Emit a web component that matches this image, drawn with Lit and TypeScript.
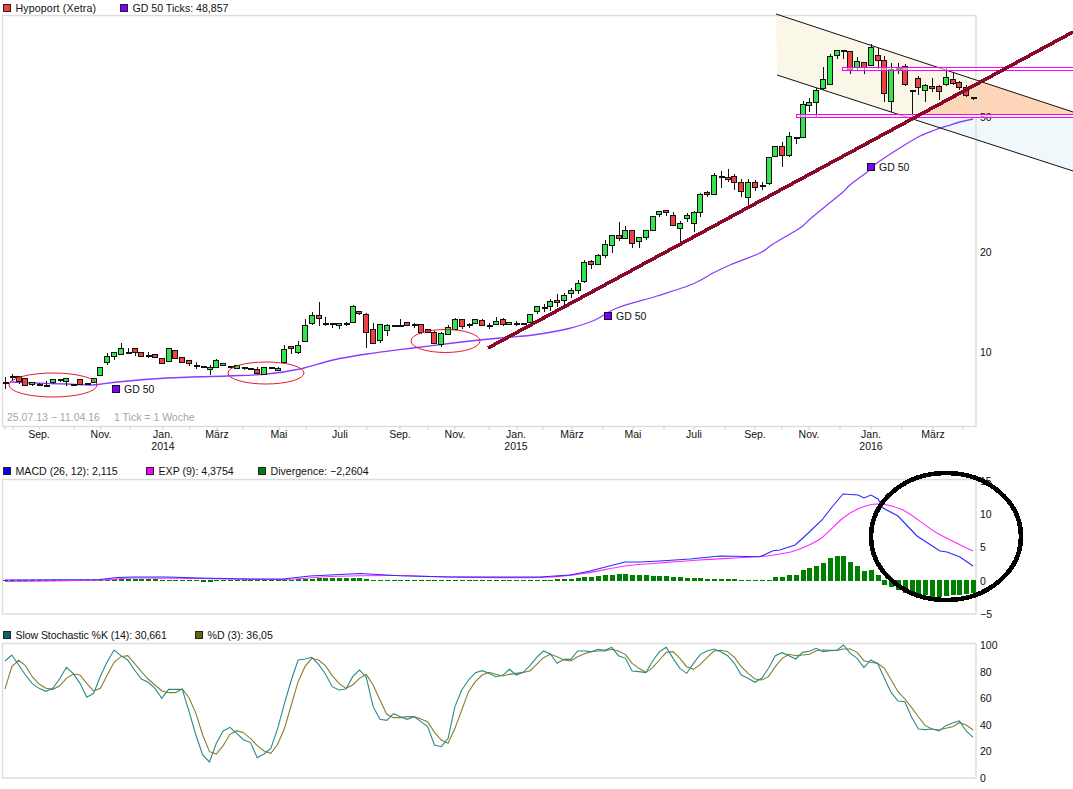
import {LitElement, html, svg, css} from 'lit';
import {customElement} from 'lit/decorators.js';

// weekly x position, 143 weeks across the plot
const wx = (i: number) => Math.round(5 + i * 6.817);
const pts = (p: number[][]) => p.map((q) => q.join(',')).join(' ');

// catmull-rom through the points, for the hand read moving averages
const smooth = (p: number[][]) => {
  let d = `M${p[0][0]} ${p[0][1]}`;
  for (let i = 0; i < p.length - 1; i++) {
    const a = p[Math.max(i - 1, 0)], b = p[i], c = p[i + 1], e = p[Math.min(i + 2, p.length - 1)];
    const c1 = [b[0] + (c[0] - a[0]) / 6, b[1] + (c[1] - a[1]) / 6];
    const c2 = [c[0] - (e[0] - b[0]) / 6, c[1] - (e[1] - b[1]) / 6];
    d += ` C${c1[0].toFixed(1)} ${c1[1].toFixed(1)} ${c2[0].toFixed(1)} ${c2[1].toFixed(1)} ${c[0]} ${c[1]}`;
  }
  return d;
};

// [bodyTop, bodyBottom, high, low, kind] kind: 0 up, 1 down, 2 flat
const CANDLES = [
  [382,382,377,388,2],[376,376,374,380,2],[376,381,376,383,1],[378,385,378,385,1],[382,384,382,385,0],
  [384,384,383,385,2],[385,385,381,385,2],[379,382,379,383,0],[379,379,379,381,2],[378,381,378,385,0],
  [384,384,384,384,2],[379,384,379,384,1],[383,383,383,383,2],[378,382,378,382,0],[367,375,367,375,0],
  [356,362,353,364,0],[352,356,352,359,0],[348,354,343,354,0],[352,352,348,352,2],[348,352,348,355,1],
  [352,356,352,356,1],[355,355,352,357,2],[354,357,354,357,1],[358,363,358,363,1],[348,361,348,361,0],
  [350,358,350,358,1],[357,362,357,362,1],[360,363,360,365,1],[365,365,362,368,2],[366,366,366,366,2],
  [367,369,365,374,0],[360,367,359,367,0],[363,365,363,365,0],[366,366,366,367,2],[365,368,365,368,0],
  [367,367,367,369,2],[368,368,368,368,2],[369,373,367,373,1],[367,374,367,374,0],[367,367,367,367,2],
  [368,370,367,370,0],[349,362,345,362,0],[346,348,346,353,1],[345,352,341,353,0],[325,341,319,341,0],
  [315,323,312,324,0],[315,318,302,325,1],[323,323,317,325,2],[323,323,323,327,2],[323,325,323,328,0],
  [323,323,322,325,2],[306,322,305,322,0],[311,313,311,314,1],[314,332,313,347,1],[329,343,323,343,1],
  [324,340,324,342,0],[325,330,324,335,0],[325,325,325,325,2],[325,325,319,325,2],[322,325,322,325,1],
  [324,324,323,327,2],[324,332,324,333,1],[329,332,329,332,1],[332,343,331,343,1],[333,344,332,346,0],
  [327,334,325,334,0],[319,329,318,329,0],[319,326,319,328,1],[324,324,323,327,2],[319,323,319,323,0],
  [320,325,319,325,1],[325,325,323,328,2],[321,324,317,324,0],[319,324,318,325,1],[322,324,322,324,0],
  [323,323,321,325,2],[323,323,323,323,2],[314,322,314,322,0],[306,311,306,313,0],[307,307,304,311,2],
  [301,306,299,310,0],[300,302,294,306,1],[295,300,293,304,0],[290,293,288,297,0],[283,290,280,293,0],
  [262,281,260,282,0],[261,264,260,268,1],[255,264,254,264,0],[244,255,240,257,0],[235,245,235,252,0],
  [235,238,222,240,1],[230,238,226,238,0],[230,243,230,247,1],[237,241,237,247,0],[230,237,230,239,0],
  [216,230,216,230,0],[211,214,211,216,0],[210,212,210,215,1],[215,225,212,225,1],[223,228,221,243,0],
  [215,218,213,221,0],[212,223,211,231,0],[194,212,193,216,0],[192,194,191,196,1],[175,194,173,194,0],
  [176,176,171,187,2],[177,179,169,181,1],[176,182,174,189,1],[182,191,179,196,1],[182,197,179,208,0],
  [182,187,180,190,1],[185,185,182,189,2],[157,183,157,184,0],[146,156,146,156,0],[146,155,142,166,1],
  [136,155,132,156,0],[137,137,137,143,2],[104,137,101,137,0],[102,105,98,111,0],[90,102,88,117,0],
  [79,88,67,89,0],[56,84,54,84,0],[50,55,50,58,0],[50,50,50,58,2],[51,69,51,73,1],
  [61,67,57,70,0],[62,67,62,73,1],[47,65,44,65,0],[55,60,48,68,1],[60,93,56,101,1],
  [69,101,63,111,0],[68,68,63,73,2],[66,84,64,85,1],[90,90,90,117,2],[78,87,76,94,1],
  [85,90,84,101,0],[86,88,78,91,1],[86,91,85,99,1],[77,84,68,85,0],[79,83,73,84,1],
  [82,87,81,89,1],[87,95,85,96,1],[97,97,97,99,2],
];

const GD50 = [[10,382],[33,383],[67,384],[93,385],[117,382],[167,378],[227,376],[267,374],[300,369],[333,360],[367,354],
  [413,348],[453,343],[500,338],[533,335],[567,329],[595,320],[617,308],[657,296],[693,284],[713,273],[730,265],[760,253],
  [773,244],[800,228],[810,219],[827,205],[843,192],[850,185],[867,172],[877,163],[903,146],[920,136],[935,130],[947,126],[960,122],[973,119]];

const MACD = [[5,580],[100,579.5],[117,577.5],[133,577],[167,577],[200,578],[250,579],[283,579],[310,576],[340,574.5],[360,573.5],
  [400,575.7],[450,577],[500,577],[540,577],[570,575],[590,571],[625,562],[640,562],[660,561],[690,559],[720,556],[760,556.7],
  [773,550.7],[780,550],[795,545],[803,538],[822,520],[832,507],[843,494],[858,495],[864,498],[871,495],[878,499],[883,508],
  [898,516],[917,536],[940,551],[947,552],[960,557],[973,566]];
const EXP = [[5,581.5],[100,580],[133,578],[200,578.5],[283,579.5],[330,576.5],[400,575.5],[450,577],[540,577.5],[580,574],
  [625,566],[660,563],[700,560],[760,556.5],[780,554],[797,550],[820,539],[843,518],[860,508],[878,504],[903,510],[937,533],[973,551]];

const f = (n: number, v: number) => Array(n).fill(v);
const DIVERGENCE: number[] = [
  ...f(16,1),...f(7,2),...f(6,1),-2,-2,...f(6,1),-1,...f(5,1),2,2,2,...f(7,3),2,...f(27,1),
  2,2,2,3,4,4,5,6,6,7,7,6,6,6,5,5,5,4,4,3,3,3,2,2,2,2,2,1,1,1,1,1,
  4,4,6,6,11,13,15,18,23,25,25,19,15,10,11,6,-5,-7,-10,-13,-15,-16,-15,-16.7,-16.7,-16,-15,-15,-13.5,-13,
];

// read off the panel at 3x: y = 625 + v / 3
const STOCH_K = [108,90,120,150,176,190,199,190,162,127,145,175,217,205,153,110,75,92,105,135,162,172,190,220,193,193,193,
  260,330,390,411,355,318,307,325,345,352,398,387,370,310,235,165,105,102,97,118,147,185,195,192,155,135,157,245,283,286,266,275,
  283,275,290,305,360,365,340,245,195,165,143,137,145,155,151,133,150,142,122,97,78,87,115,103,103,78,78,80,73,76,67,92,100,
  138,140,143,108,80,67,100,130,145,115,88,78,72,80,92,115,150,160,172,160,130,92,83,92,102,82,79,70,80,77,76,60,85,100,128,105,
  115,160,203,228,230,277,312,314,312,318,302,294,288,318,337];
const STOCH_D = [192,125,106,122,155,177,190,193,183,160,147,150,175,198,190,150,112,95,92,115,140,162,180,198,203,203,192,
  218,265,330,380,387,362,328,317,323,340,362,378,385,358,310,240,170,125,100,105,122,152,175,190,180,160,148,180,225,268,278,278,
  275,275,282,290,322,345,355,310,255,200,170,150,142,148,153,148,145,142,138,118,98,88,95,105,108,95,86,80,78,78,73,78,88,
  115,130,142,128,105,82,80,100,125,133,118,97,78,76,80,97,125,145,162,165,155,125,100,88,92,90,88,77,75,76,76,72,72,82,107,112,
  115,130,165,200,222,248,276,302,312,315,310,305,293,300,315];

const MONTH_TICKS = [5,13,39,74,101,130,163,190,217,243,279,306,339,367,400,428,455,489,517,543,572,603,633,664,694,725,755,782,809,840,871,902,933,963];
const MONTHS: [number, string, string?][] = [[39,'Sep.'],[101,'Nov.'],[163,'Jan.','2014'],[217,'März'],[279,'Mai'],[340,'Juli'],[400,'Sep.'],
  [455,'Nov.'],[516,'Jan.','2015'],[572,'März'],[633,'Mai'],[694,'Juli'],[755,'Sep.'],[809,'Nov.'],[871,'Jan.','2016'],[933,'März']];

@customElement('app-root')
export class AppRoot extends LitElement {
  static styles = css`
    :host {
      display: block;
      width: 1073px;
      height: 789px;
      overflow: hidden;
      background: #fff;
      font-family: "Liberation Sans", Arial, sans-serif;
      font-size: 10.6px;
      color: #111;
    }
    .legend {
      display: grid;
      justify-content: start;
      box-sizing: border-box;
      padding-left: 3px;
      line-height: 12px;
    }
    .legend.l1 { height: 15px; grid-template-columns: 117px auto; }
    .legend.l2 { height: 19px; padding-top: 3px; grid-template-columns: 143px 112px auto; }
    .legend.l3 { height: 18px; padding-top: 1px; grid-template-columns: 192px auto; }
    .l1 .item:first-child { letter-spacing: 0.15px; }
    .l3 .item:first-child { letter-spacing: -0.1px; }
    .item {
      display: flex;
      align-items: center;
      gap: 4.5px;
      white-space: nowrap;
    }
    .swatch {
      width: 6px;
      height: 6px;
      border: 1px solid #222;
    }
    svg {
      display: block;
      overflow: visible;
    }
    text {
      font-family: "Liberation Sans", Arial, sans-serif;
      font-size: 10.5px;
      fill: #111;
    }
    .mid { text-anchor: middle; }
    .note { fill: #a6a6a6; }
    .frame { fill: none; stroke: #dcdcdc; stroke-width: 1.4; }
    .tick { stroke: #cfcfcf; stroke-width: 1; }
    .wick { stroke: #111; stroke-width: 1; shape-rendering: crispEdges; }
    .body { stroke: #111; stroke-width: 1; shape-rendering: crispEdges; }
    .up { fill: #33e44c; }
    .down { fill: #f04040; }
    .flat { fill: #111; shape-rendering: crispEdges; }
    .gd { fill: none; stroke: #8a3cff; stroke-width: 1.3; }
    .gd-box { fill: #7a00ff; stroke: #111; stroke-width: 1; shape-rendering: crispEdges; }
    .channel { stroke: #111; stroke-width: 1; }
    .cream { fill: #faf6e8; }
    .orange { fill: #fdd5b8; }
    .blue { fill: #f0f8fc; }
    .level { fill: rgba(255, 255, 255, 0.55); stroke: #ff00ff; stroke-width: 1; shape-rendering: crispEdges; }
    .trend { stroke: #8b0a2a; stroke-width: 3.6; shape-rendering: crispEdges; }
    .oval { fill: none; stroke: #e8182e; stroke-width: 1; }
    .macd { fill: none; stroke: #2a2aff; stroke-width: 1.1; }
    .exp { fill: none; stroke: #ff2cff; stroke-width: 1.1; }
    .bar { fill: #008000; shape-rendering: crispEdges; }
    .ring { fill: none; stroke: #000; stroke-width: 4.6; shape-rendering: crispEdges; }
    .k { fill: none; stroke: #2a8a8a; stroke-width: 1.1; }
    .d { fill: none; stroke: #857f2e; stroke-width: 1.1; }
  `;

  _legend(cls: string, items: [string, string][]) {
    return html`
      <div class="legend ${cls}">
        ${items.map(([c, t]) => html`
          <div class="item"><span class="swatch" style="background:${c}"></span>${t}</div>
        `)}
      </div>
    `;
  }

  _candle(c: number[], i: number) {
    const [top, bot, hi, lo, kind] = c;
    const x = wx(i);
    const wick = svg`<line class="wick" x1=${x + 0.5} x2=${x + 0.5} y1=${hi} y2=${lo + 1}></line>`;
    if (kind === 2) {
      return svg`${wick}<rect class="flat" x=${x - 2} y=${top} width="6" height="2"></rect>`;
    }
    return svg`${wick}<rect class="body ${kind ? 'down' : 'up'}" x=${x - 2.5} y=${top + 0.5} width="5" height=${bot - top}></rect>`;
  }

  _gdLabel(x: number, y: number) {
    return svg`
      <rect class="gd-box" x=${x + 0.5} y=${y + 0.5} width="7" height="7"></rect>
      <text x=${x + 12} y=${y + 8}>GD 50</text>
    `;
  }

  _main() {
    return svg`
      <svg width="1073" height="445" viewBox="0 15 1073 445">
        <polygon class="cream" points="776,14 983,82 925,113 915,116 903,116 777,75"></polygon>
        <polygon class="orange" points="983,82 1073,112 1073,114 921,114"></polygon>
        <polygon class="blue" points="915,117 1073,117 1073,171 921,122"></polygon>
        <rect class="frame" x="2.5" y="15.5" width="973.5" height="411"></rect>
        ${MONTH_TICKS.map((x) => svg`<line class="tick" x1=${x} x2=${x} y1="427" y2="430"></line>`)}
        ${MONTHS.map(([x, m, y]) => svg`
          <text class="mid" x=${x} y="438">${m}</text>
          ${y ? svg`<text class="mid" x=${x} y="450">${y}</text>` : ''}
        `)}
        <text x="980" y="121">50</text>
        <text x="980" y="256">20</text>
        <text x="980" y="356">10</text>
        <text class="note" x="7" y="421">25.07.13 − 11.04.16</text>
        <text class="note" x="114" y="421">1 Tick = 1 Woche</text>
        <path class="gd" d=${smooth(GD50)}></path>
        ${CANDLES.map((c, i) => this._candle(c, i))}
        ${this._gdLabel(112, 385)}
        ${this._gdLabel(604, 312)}
        ${this._gdLabel(867, 163)}
        <ellipse class="oval" cx="53" cy="385" rx="44" ry="12"></ellipse>
        <ellipse class="oval" cx="266" cy="373" rx="38" ry="11"></ellipse>
        <ellipse class="oval" cx="445.5" cy="341" rx="34.5" ry="11.5"></ellipse>
        <line class="channel" x1="776" y1="14" x2="1073" y2="112"></line>
        <line class="channel" x1="777" y1="75" x2="1073" y2="171"></line>
        <rect class="level" x="842.5" y="67.5" width="240" height="3"></rect>
        <rect class="level" x="796.5" y="114.5" width="290" height="3"></rect>
        <line class="trend" x1="488" y1="348" x2="1073" y2="32"></line>
      </svg>
    `;
  }

  _macd() {
    return svg`
      <svg width="1073" height="146" viewBox="0 479 1073 146">
        <rect class="frame" x="2.5" y="479.5" width="973.5" height="134.5"></rect>
        ${DIVERGENCE.map((v, i) => svg`
          <rect class="bar" x=${wx(i) - 2} y=${v > 0 ? 581 - v : 580} width="5" height=${Math.abs(v)}></rect>
        `)}
        <path class="exp" d=${smooth(EXP)}></path>
        <polyline class="macd" points=${pts(MACD)}></polyline>
        ${[['15', 485], ['10', 518], ['5', 551], ['0', 585], ['−5', 618]].map(([t, y]) => svg`
          <text x="980" y=${y}>${t}</text>
        `)}
        <ellipse class="ring" cx="946" cy="536.5" rx="75" ry="63.5"></ellipse>
      </svg>
    `;
  }

  _stoch() {
    const line = (a: number[]) => pts(a.map((v, i) => [5 + i * 6.817, 625 + v / 3]));
    return svg`
      <svg width="1073" height="146" viewBox="0 643 1073 146">
        <rect class="frame" x="2.5" y="643.5" width="973.5" height="134.5"></rect>
        <polyline class="d" points=${line(STOCH_D)}></polyline>
        <polyline class="k" points=${line(STOCH_K)}></polyline>
        ${[['100', 649], ['80', 676], ['60', 702], ['40', 729], ['20', 755], ['0', 782]].map(([t, y]) => svg`
          <text x="980" y=${y}>${t}</text>
        `)}
      </svg>
    `;
  }

  render() {
    return html`
      ${this._legend('l1', [['#f04040', 'Hypoport (Xetra)'], ['#7a00ff', 'GD 50 Ticks: 48,857']])}
      ${this._main()}
      ${this._legend('l2', [['#0000ff', 'MACD (26, 12): 2,115'], ['#ff00ff', 'EXP (9): 4,3754'], ['#008000', 'Divergence: −2,2604']])}
      ${this._macd()}
      ${this._legend('l3', [['#006666', 'Slow Stochastic %K (14): 30,661'], ['#666600', '%D (3): 36,05']])}
      ${this._stoch()}
    `;
  }
}
